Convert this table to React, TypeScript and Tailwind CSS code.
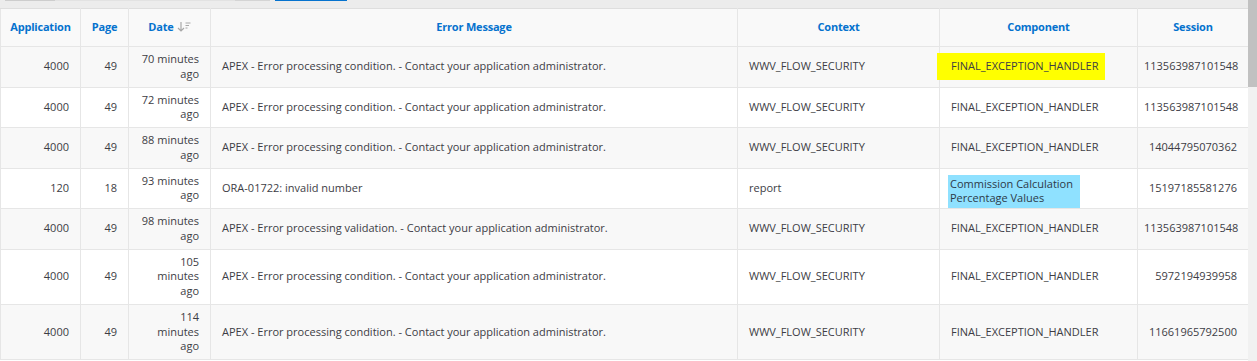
import React from "react"

type Row = {
  app: string
  page: string
  date: string[]
  msg: string
  ctx: string
  comp: string
  hl?: "yellow" | "blue"
  session: string
}

const condition = "APEX - Error processing condition. - Contact your application administrator."
const validation = "APEX - Error processing validation. - Contact your application administrator."

const rows: Row[] = [
  { app: "4000", page: "49", date: ["70 minutes", "ago"], msg: condition, ctx: "WWV_FLOW_SECURITY", comp: "FINAL_EXCEPTION_HANDLER", hl: "yellow", session: "113563987101548" },
  { app: "4000", page: "49", date: ["72 minutes", "ago"], msg: condition, ctx: "WWV_FLOW_SECURITY", comp: "FINAL_EXCEPTION_HANDLER", session: "113563987101548" },
  { app: "4000", page: "49", date: ["88 minutes", "ago"], msg: condition, ctx: "WWV_FLOW_SECURITY", comp: "FINAL_EXCEPTION_HANDLER", session: "14044795070362" },
  { app: "120", page: "18", date: ["93 minutes", "ago"], msg: "ORA-01722: invalid number", ctx: "report", comp: "Commission Calculation Percentage Values", hl: "blue", session: "15197185581276" },
  { app: "4000", page: "49", date: ["98 minutes", "ago"], msg: validation, ctx: "WWV_FLOW_SECURITY", comp: "FINAL_EXCEPTION_HANDLER", session: "113563987101548" },
  { app: "4000", page: "49", date: ["105", "minutes", "ago"], msg: condition, ctx: "WWV_FLOW_SECURITY", comp: "FINAL_EXCEPTION_HANDLER", session: "5972194939958" },
  { app: "4000", page: "49", date: ["114", "minutes", "ago"], msg: condition, ctx: "WWV_FLOW_SECURITY", comp: "FINAL_EXCEPTION_HANDLER", session: "11661965792500" },
]

const headers = [
  { label: "Application", w: "w-[80px]" },
  { label: "Page", w: "w-[48px]" },
  { label: "Date", w: "w-[82px]", sort: true },
  { label: "Error Message", w: "w-[527px]" },
  { label: "Context", w: "w-[202px]" },
  { label: "Component", w: "w-[198px]" },
  { label: "Session", w: "w-[111px]" },
]

function SortIcon() {
  return (
    <svg width="14" height="12" viewBox="0 0 14 12" className="inline-block ml-[3px] -mt-[2px] align-middle">
      <path d="M4 1v9M1 7l3 3 3-3" fill="none" stroke="#a8a8a8" strokeWidth="1.2" />
      <path d="M8.5 2h5M8.5 4.5h3.5M8.5 7h2" stroke="#a8a8a8" strokeWidth="1" />
    </svg>
  )
}

const td = "border border-[#e6e6e6] px-[11px] py-[5px] align-middle"

export default function App() {
  return (
    <div
      className="w-[1257px] h-[361px] overflow-hidden flex bg-white text-[12px] leading-[14.75px] text-[#3d3d45]"
      style={{ fontFamily: '"Open Sans", "Noto Sans", sans-serif' }}
    >
      <div className="w-[1248px] flex flex-col">
        {/* toolbar remnant */}
        <div className="h-[8px] shrink-0 bg-[#ececec] flex items-start">
          <div className="ml-[5px] h-[1px] w-[50px] bg-[#cdcdcd]" />
          <div className="h-[1px] w-[180px] bg-[#e2e2e2]" />
          <div className="h-[1px] w-[35px] bg-[#d4d4d4]" />
          <div className="ml-[5px] h-[1px] w-[72px] bg-[#0572ce]" />
        </div>

        <table className="table-fixed border-collapse w-[1248px] text-[11px]">
          <thead>
            <tr className="bg-[#f9f9f9] h-[38px]">
              {headers.map((h) => (
                <th key={h.label} className={`${h.w} border border-[#e6e6e6] border-t-[#dedede] px-[8px] text-center font-bold text-[#0572ce] tracking-[-0.2px]`}>
                  {h.label}
                  {h.sort && <SortIcon />}
                </th>
              ))}
            </tr>
          </thead>
          <tbody>
            {rows.map((r, i) => (
              <tr key={i} className={i % 2 === 0 ? "bg-[#f8f8f8]" : "bg-white"}>
                <td className={`${td} text-right`}>{r.app}</td>
                <td className={`${td} text-right`}>{r.page}</td>
                <td className={`${td} text-right`}>
                  {r.date.map((d, j) => (
                    <div key={j}>{d}</div>
                  ))}
                </td>
                <td className={`${td} whitespace-nowrap`}>{r.msg}</td>
                <td className={td}>{r.ctx}</td>
                <td className={td}>
                  {r.hl === "yellow" ? (
                    <span className="inline-block -ml-[14px] pl-[14px] pr-[7px] py-[6px] bg-[#ffff00]">{r.comp}</span>
                  ) : r.hl === "blue" ? (
                    <span className="block -ml-[3px] pl-[2px] pr-[7px] pt-[2px] pb-[3px] w-[132px] bg-[#8fe1ff] text-[#2d3a48] mt-[1px] -mb-[6px]">
                      {r.comp}
                    </span>
                  ) : (
                    r.comp
                  )}
                </td>
                <td className={`${td} pl-[6px] text-right`}>{r.session}</td>
              </tr>
            ))}
          </tbody>
        </table>
      </div>

      {/* scrollbar */}
      <div className="w-[9px] h-full bg-[#f1f1f1] flex flex-col">
        <div className="h-[87px] bg-[#c1c1c1]" />
      </div>
    </div>
  )
}
